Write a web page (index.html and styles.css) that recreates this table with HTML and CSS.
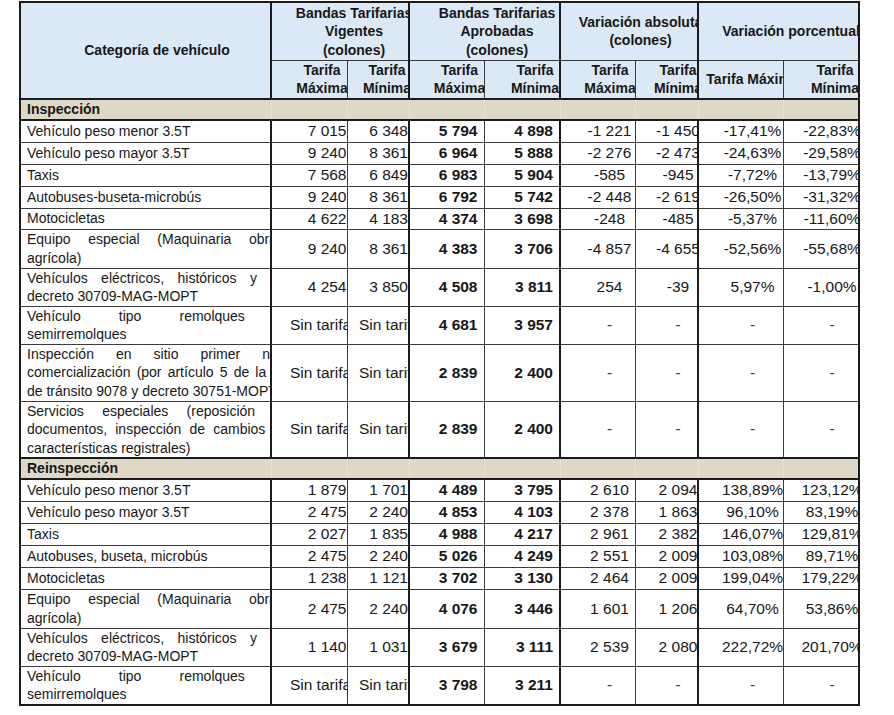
FILE: index.html
```html
<!DOCTYPE html>
<html lang="es">
<head>
<meta charset="utf-8">
<title>Bandas tarifarias</title>
<link rel="stylesheet" href="styles.css">
</head>
<body>
<div class="page">
<table class="tarifas">
  <colgroup>
    <col class="k-cat"><col class="k-76"><col class="k-62"><col class="k-75"><col class="k-76"><col class="k-75"><col class="k-63"><col class="k-85"><col class="k-76">
  </colgroup>
  <thead>
    <tr class="h1">
      <th rowspan="2" class="cat"><div class="hc hw-cat">Categoría de vehículo</div></th>
      <th colspan="2" class="g"><div class="hc hw-vig">Bandas Tarifarias<br>Vigentes<br>(colones)</div></th>
      <th colspan="2" class="g"><div class="hc hw-apr">Bandas Tarifarias<br>Aprobadas<br>(colones)</div></th>
      <th colspan="2" class="g"><div class="hc hw-abs">Variación absoluta<br>(colones)</div></th>
      <th colspan="2" class="g"><div class="hc hw-pct">Variación porcentual</div></th>
    </tr>
    <tr class="h2">
      <th class="g"><div class="hc sw1">Tarifa<br>Máxima</div></th>
      <th><div class="hc sw2">Tarifa<br>Mínima</div></th>
      <th class="g"><div class="hc sw3">Tarifa<br>Máxima</div></th>
      <th><div class="hc sw4">Tarifa<br>Mínima</div></th>
      <th class="g"><div class="hc sw5">Tarifa<br>Máxima</div></th>
      <th><div class="hc sw6">Tarifa<br>Mínima</div></th>
      <th class="g"><div class="hc sw7">Tarifa Máxima</div></th>
      <th><div class="hc sw8">Tarifa<br>Mínima</div></th>
    </tr>
  </thead>
  <tbody>
    <tr class="band"><td>Inspección</td><td></td><td></td><td></td><td></td><td></td><td></td><td></td><td></td></tr>

    <tr class="r1"><td class="l">Vehículo peso menor 3.5T</td><td class="n1">7 015</td><td class="n2">6 348</td><td class="nb">5 794</td><td class="nb">4 898</td><td><div class="v x5">-1 221</div></td><td><div class="v x6">-1 450</div></td><td><div class="v x7">-17,41%</div></td><td><div class="v x8">-22,83%</div></td></tr>
    <tr class="r1"><td class="l">Vehículo peso mayor 3.5T</td><td class="n1">9 240</td><td class="n2">8 361</td><td class="nb">6 964</td><td class="nb">5 888</td><td><div class="v x5">-2 276</div></td><td><div class="v x6">-2 473</div></td><td><div class="v x7">-24,63%</div></td><td><div class="v x8">-29,58%</div></td></tr>
    <tr class="r1"><td class="l">Taxis</td><td class="n1">7 568</td><td class="n2">6 849</td><td class="nb">6 983</td><td class="nb">5 904</td><td><div class="v x5">-585</div></td><td><div class="v x6">-945</div></td><td><div class="v x7">-7,72%</div></td><td><div class="v x8">-13,79%</div></td></tr>
    <tr class="r1"><td class="l">Autobuses-buseta-microbús</td><td class="n1">9 240</td><td class="n2">8 361</td><td class="nb">6 792</td><td class="nb">5 742</td><td><div class="v x5">-2 448</div></td><td><div class="v x6">-2 619</div></td><td><div class="v x7">-26,50%</div></td><td><div class="v x8">-31,32%</div></td></tr>
    <tr class="r1s"><td class="l">Motocicletas</td><td class="n1">4 622</td><td class="n2">4 183</td><td class="nb">4 374</td><td class="nb">3 698</td><td><div class="v x5">-248</div></td><td><div class="v x6">-485</div></td><td><div class="v x7">-5,37%</div></td><td><div class="v x8">-11,60%</div></td></tr>
    <tr class="r2a"><td class="l"><div class="j w250">Equipo especial (Maquinaria obra</div><div>agrícola)</div></td><td class="n1">9 240</td><td class="n2">8 361</td><td class="nb">4 383</td><td class="nb">3 706</td><td><div class="v x5">-4 857</div></td><td><div class="v x6">-4 655</div></td><td><div class="v x7">-52,56%</div></td><td><div class="v x8">-55,68%</div></td></tr>
    <tr class="r2"><td class="l"><div class="j w230">Vehículos eléctricos, históricos y</div><div>decreto 30709-MAG-MOPT</div></td><td class="n1">4 254</td><td class="n2">3 850</td><td class="nb">4 508</td><td class="nb">3 811</td><td><div class="v x5">254</div></td><td><div class="v x6">-39</div></td><td><div class="v x7">5,97%</div></td><td><div class="v x8">-1,00%</div></td></tr>
    <tr class="r2"><td class="l"><div class="j w263">Vehículo tipo remolques y</div><div>semirremolques</div></td><td><div class="v t1">Sin tarifa</div></td><td><div class="v t2">Sin tarifa</div></td><td class="nb">4 681</td><td class="nb">3 957</td><td><div class="v x5 d">-</div></td><td><div class="v x6 d">-</div></td><td><div class="v x7 d">-</div></td><td><div class="v x8 d">-</div></td></tr>
    <tr class="r3"><td class="l"><div class="j w264">Inspección en sitio primer nivel</div><div class="j w268">comercialización (por artículo 5 de la Ley</div><div>de tránsito 9078 y decreto 30751-MOPT)</div></td><td><div class="v t1">Sin tarifa</div></td><td><div class="v t2">Sin tarifa</div></td><td class="nb">2 839</td><td class="nb">2 400</td><td><div class="v x5 d">-</div></td><td><div class="v x6 d">-</div></td><td><div class="v x7 d">-</div></td><td><div class="v x8 d">-</div></td></tr>
    <tr class="r3"><td class="l"><div class="j w262">Servicios especiales (reposición de</div><div class="j w262">documentos, inspección de cambios de</div><div>características registrales)</div></td><td><div class="v t1">Sin tarifa</div></td><td><div class="v t2">Sin tarifa</div></td><td class="nb">2 839</td><td class="nb">2 400</td><td><div class="v x5 d">-</div></td><td><div class="v x6 d">-</div></td><td><div class="v x7 d">-</div></td><td><div class="v x8 d">-</div></td></tr>

    <tr class="band"><td>Reinspección</td><td></td><td></td><td></td><td></td><td></td><td></td><td></td><td></td></tr>

    <tr class="r1"><td class="l">Vehículo peso menor 3.5T</td><td class="n1">1 879</td><td class="n2">1 701</td><td class="nb">4 489</td><td class="nb">3 795</td><td><div class="v x5">2 610</div></td><td><div class="v x6">2 094</div></td><td><div class="v x7">138,89%</div></td><td><div class="v x8">123,12%</div></td></tr>
    <tr class="r1"><td class="l">Vehículo peso mayor 3.5T</td><td class="n1">2 475</td><td class="n2">2 240</td><td class="nb">4 853</td><td class="nb">4 103</td><td><div class="v x5">2 378</div></td><td><div class="v x6">1 863</div></td><td><div class="v x7">96,10%</div></td><td><div class="v x8">83,19%</div></td></tr>
    <tr class="r1"><td class="l">Taxis</td><td class="n1">2 027</td><td class="n2">1 835</td><td class="nb">4 988</td><td class="nb">4 217</td><td><div class="v x5">2 961</div></td><td><div class="v x6">2 382</div></td><td><div class="v x7">146,07%</div></td><td><div class="v x8">129,81%</div></td></tr>
    <tr class="r1"><td class="l">Autobuses, buseta, microbús</td><td class="n1">2 475</td><td class="n2">2 240</td><td class="nb">5 026</td><td class="nb">4 249</td><td><div class="v x5">2 551</div></td><td><div class="v x6">2 009</div></td><td><div class="v x7">103,08%</div></td><td><div class="v x8">89,71%</div></td></tr>
    <tr class="r1"><td class="l">Motocicletas</td><td class="n1">1 238</td><td class="n2">1 121</td><td class="nb">3 702</td><td class="nb">3 130</td><td><div class="v x5">2 464</div></td><td><div class="v x6">2 009</div></td><td><div class="v x7">199,04%</div></td><td><div class="v x8">179,22%</div></td></tr>
    <tr class="r2a"><td class="l"><div class="j w250">Equipo especial (Maquinaria obra</div><div>agrícola)</div></td><td class="n1">2 475</td><td class="n2">2 240</td><td class="nb">4 076</td><td class="nb">3 446</td><td><div class="v x5">1 601</div></td><td><div class="v x6">1 206</div></td><td><div class="v x7">64,70%</div></td><td><div class="v x8">53,86%</div></td></tr>
    <tr class="r2"><td class="l"><div class="j w230">Vehículos eléctricos, históricos y</div><div>decreto 30709-MAG-MOPT</div></td><td class="n1">1 140</td><td class="n2">1 031</td><td class="nb">3 679</td><td class="nb">3 111</td><td><div class="v x5">2 539</div></td><td><div class="v x6">2 080</div></td><td><div class="v x7">222,72%</div></td><td><div class="v x8">201,70%</div></td></tr>
    <tr class="r2 last"><td class="l"><div class="j w263">Vehículo tipo remolques y</div><div>semirremolques</div></td><td><div class="v t1">Sin tarifa</div></td><td><div class="v t2">Sin tarifa</div></td><td class="nb">3 798</td><td class="nb">3 211</td><td><div class="v x5 d">-</div></td><td><div class="v x6 d">-</div></td><td><div class="v x7 d">-</div></td><td><div class="v x8 d">-</div></td></tr>
  </tbody>
</table>
</div>
</body>
</html>
```
FILE: styles.css
```css
* { box-sizing: border-box; }

body {
  margin: 0;
  background: #ffffff;
  color: #171717;
  font-family: "Liberation Sans", Arial, sans-serif;
}

.page {
  padding: 1px 0 0 19px;
}

.tarifas {
  border-collapse: collapse;
  table-layout: fixed;
  width: 840px;
  border: 2px solid #1b1b1b;
}

.k-cat { width: 251px; }
.k-76 { width: 76px; }
.k-62 { width: 62px; }
.k-75 { width: 75px; }
.k-63 { width: 63px; }
.k-85 { width: 85px; }

.tarifas th,
.tarifas td {
  border: 1px solid #3c3c3c;
  padding: 0;
  overflow: hidden;
  white-space: nowrap;
  vertical-align: middle;
}

/* ---------- header ---------- */
.tarifas th {
  background: #dbe8f5;
  font-size: 14px;
  font-weight: bold;
  line-height: 18.5px;
  text-align: left;
}
.tarifas th.g { border-left: 2px solid #1b1b1b; }
.h1 { height: 58px; }
.h2 { height: 39px; }
.h2 th, .cat { border-bottom: 2px solid #1b1b1b; }
.h1 th { border-top: 2px solid #1b1b1b; }

.hc { text-align: center; }
.hw-cat { width: 272px; }
.hw-vig { width: 164px; }
.hw-apr { width: 174px; }
.hw-abs { width: 159px; }
.hw-pct { width: 184px; }
.sw1 { width: 100px; }
.sw2 { width: 79px; }
.sw3 { width: 99px; }
.sw4 { width: 101px; }
.sw5 { width: 98px; }
.sw6 { width: 85px; }
.sw7 { width: 107px; }
.sw8 { width: 103px; }

/* ---------- band rows ---------- */
.tarifas .band td {
  background: #ddd9c6;
  height: 21px;
  border-top: 2px solid #1b1b1b;
  border-bottom: 2px solid #1b1b1b;
  border-left: 1px solid #e7e4d5;
  border-right: 1px solid #e7e4d5;
  font-size: 14px;
  font-weight: bold;
  padding-left: 6px;
  line-height: 17px;
}

/* ---------- body ---------- */
.tarifas tbody tr:not(.band) td:nth-child(2),
.tarifas tbody tr:not(.band) td:nth-child(4),
.tarifas tbody tr:not(.band) td:nth-child(6),
.tarifas tbody tr:not(.band) td:nth-child(8) {
  border-left: 2px solid #1b1b1b;
}
.tarifas tbody tr:not(.band) td:nth-child(1) {
  border-right: 2px solid #1b1b1b;
}

.r1 { height: 22px; }
.r1s { height: 21px; }
.r2 { height: 38px; }
.r2a { height: 39px; }
.r3 { height: 57px; }
.tarifas tr.last td { border-bottom: 2px solid #1b1b1b; }

.tarifas td {
  font-size: 15.5px;
  line-height: 18px;
}

.tarifas td.l {
  font-size: 14px;
  line-height: 18.5px;
  padding-left: 6px;
  text-align: left;
}
.j {
  white-space: normal;
  text-align: justify;
  text-align-last: justify;
}
.w230 { width: 230px; }
.w250 { width: 250px; }
.w262 { width: 262px; }
.w263 { width: 263px; }
.w264 { width: 264px; }
.w268 { width: 268px; }

.n1, .n2, .nb { text-align: right; }
.n1 { padding-right: 6px; }
.n2 { padding-right: 0; }
.tarifas td.nb { padding-right: 6px; font-weight: bold; }

.v { text-align: center; }
.x5 { width: 97px; }
.x6 { width: 85px; }
.x7 { width: 107px; }
.x8 { width: 97px; }
.t1 { width: 97px; }
.t2 { width: 84px; }
.d { color: #333; }
```
